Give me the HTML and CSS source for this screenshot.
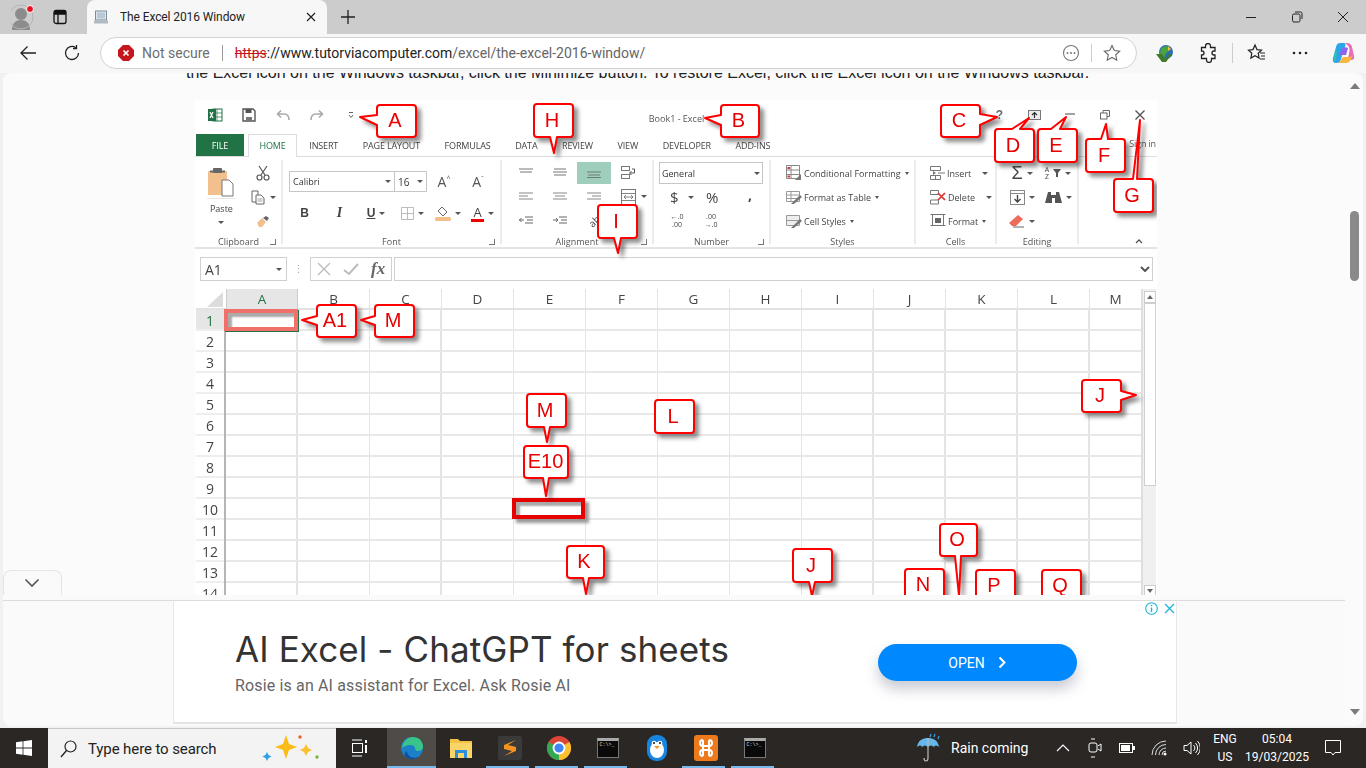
FILE: index.html
```html
<!DOCTYPE html>
<html lang="en">
<head>
<meta charset="utf-8">
<title>The Excel 2016 Window</title>
<link rel="stylesheet" href="styles.css">
</head>
<body>
<header class="tabstrip">
  <div class="profile">
    <svg width="24" height="26" viewBox="0 0 24 26"><circle cx="10" cy="10" r="6" fill="#8c8c8c"/><path d="M1 26c0-7 4-10 9-10s9 3 9 10z" fill="#8c8c8c"/><circle cx="10" cy="13" r="12" fill="none" stroke="#b5b5b5" stroke-width="1"/><circle cx="19" cy="5" r="3.5" fill="#e81123" stroke="#fff" stroke-width="1"/></svg>
  </div>
  <div class="vtabs">
    <svg width="16" height="16" viewBox="0 0 16 16"><rect x="2" y="1.5" width="12" height="13" rx="2" fill="none" stroke="#111" stroke-width="1.3"/><path d="M2 5h12M6 5v9" stroke="#111" stroke-width="1.3" fill="none"/><rect x="2" y="1.5" width="12" height="3.5" fill="#111"/></svg>
  </div>
  <div class="tab">
    <svg class="favicon" width="16" height="16" viewBox="0 0 16 16"><rect x="2.5" y="2" width="11" height="9" fill="#dfe6ec" stroke="#7d8c99"/><rect x="4" y="3.5" width="8" height="6" fill="#b8c8d6"/><rect x="1" y="11.5" width="14" height="3" fill="#aeb9c2"/></svg>
    <span class="tab-title">The Excel 2016 Window</span>
    <svg width="12" height="12" viewBox="0 0 12 12"><path d="M2 2l8 8M10 2l-8 8" stroke="#222" stroke-width="1.2"/></svg>
  </div>
  <div class="newtab"><svg width="16" height="16" viewBox="0 0 16 16"><path d="M8 1v14M1 8h14" stroke="#222" stroke-width="1.3"/></svg></div>
  <div class="winctl">
    <span class="winbtn"><svg width="12" height="12" viewBox="0 0 12 12"><path d="M1 6.5h10" stroke="#222" stroke-width="1"/></svg></span>
    <span class="winbtn"><svg width="12" height="12" viewBox="0 0 12 12"><rect x="1.5" y="3" width="7.5" height="8" rx="1.5" fill="none" stroke="#222"/><path d="M4 1h5.5A1.5 1.5 0 0 1 11 2.5V8" fill="none" stroke="#222"/></svg></span>
    <span class="winbtn"><svg width="12" height="12" viewBox="0 0 12 12"><path d="M1 1l10 10M11 1L1 11" stroke="#222" stroke-width="1"/></svg></span>
  </div>
</header>

<nav class="toolbar">
  <span class="navbtn"><svg width="18" height="16" viewBox="0 0 18 16"><path d="M17 8H2M8.500 1.500L2 8l6.500 6.500" fill="none" stroke="#222" stroke-width="1.300"/></svg></span>
  <span class="navbtn"><svg width="18" height="18" viewBox="0 0 18 18"><path d="M15.500 9A6.500 6.500 0 1 1 12.800 3.700" fill="none" stroke="#222" stroke-width="1.300"/><path d="M13.500 1v3.500H10" fill="none" stroke="#222" stroke-width="1.300"/></svg></span>
  <div class="addressbar">
    <svg class="warn" width="16" height="16" viewBox="0 0 16 16"><path d="M5 0h6l5 5v6l-5 5H5l-5-5V5z" fill="#c4161c"/><path d="M5.500 5.500l5 5M10.500 5.500l-5 5" stroke="#fff" stroke-width="1.700"/></svg>
    <span class="notsecure">Not secure</span>
    <span class="urlsep"></span>
    <span class="url"><span class="https">https</span>://www.tutorviacomputer.com<span class="urlpath">/excel/the-excel-2016-window/</span></span>
    <svg class="readicon" width="18" height="18" viewBox="0 0 18 18"><circle cx="9" cy="9" r="7.500" fill="none" stroke="#777" stroke-width="1.100"/><circle cx="5.500" cy="9" r="1" fill="#777"/><circle cx="9" cy="9" r="1" fill="#777"/><circle cx="12.500" cy="9" r="1" fill="#777"/></svg>
    <span class="addrsep"></span>
    <svg class="staricon" width="18" height="18" viewBox="0 0 18 18"><path d="M9 1.500l2.300 5 5.400.6-4 3.700 1.100 5.400L9 13.500l-4.800 2.700 1.100-5.400-4-3.700 5.400-.6z" fill="none" stroke="#666" stroke-width="1.100"/></svg>
  </div>
  <span class="extbtn ext-first"><svg width="20" height="20" viewBox="0 0 20 20"><circle cx="11" cy="9" r="7" fill="#2c6fb8"/><path d="M6 5l6-2 3 4-4 3-2 5-4-4z" fill="#4aa63c"/><path d="M13 3l3 3-3 2z" fill="#f2c037"/><path d="M1 11h6l3 5 4-5h3l-6 8H7z" fill="#3d7a2a"/></svg></span>
  <span class="extbtn"><svg width="16" height="20" viewBox="0 0 16 20"><path d="M5.500 3a2.500 2.500 0 0 1 5 0V4.500H15V8h-1a2 2 0 0 0 0 4h1v3.500h-3.500V17a2.500 2.500 0 0 1-5 0v-1.500H1.500V12H2a2 2 0 0 0 0-4H1.500V4.500h4z" fill="none" stroke="#222" stroke-width="1.300"/></svg></span>
  <span class="toolsep"></span>
  <span class="extbtn"><svg width="20" height="20" viewBox="0 0 20 20"><path d="M8 2l2 4.600 4.500.5-3.300 3.100.9 4.800L8 12.700 3.900 15l.9-4.800L1.500 7.100 6 6.600z" fill="none" stroke="#222" stroke-width="1.200"/><path d="M13 10h5M14 13h4M13 16h5" stroke="#222" stroke-width="1.200"/></svg></span>
  <span class="extbtn"><svg width="20" height="20" viewBox="0 0 20 20"><circle cx="4" cy="10" r="1.300" fill="#222"/><circle cx="10" cy="10" r="1.300" fill="#222"/><circle cx="16" cy="10" r="1.300" fill="#222"/></svg></span>
  <span class="extbtn"><svg width="24" height="24" viewBox="0 0 24 24"><path d="M9 2h4q2 0 1.500 2L10 18q-1 4-4 4H5q-4 0-3-5L5 6q1-4 4-4z" fill="#2aa6e8"/><path d="M14 2h2q4 0 5 4l2 9q1 4-3 4h-5q2-1 2.500-4l1-5q.5-5-4.500-8z" fill="#ea6cb8"/><path d="M5 22h10q3 0 4.500-3L22 14q-1 2-4 2h-5q-2 0-3 3-1 3-5 3z" fill="#f6b73c"/><path d="M8 14h7l2-7q-5-2-6.500 1.500z" fill="#8f63ee"/><path d="M3 14l3-5-1 9q-.5 3-1.500 2z" fill="#35c4a2"/></svg></span>
</nav>

<main class="viewport">
  <div class="page">
    <div class="content">
      <article class="article">
        <p class="lead">the Excel icon on the Windows taskbar, click the Minimize button. To restore Excel, click the Excel icon on the Windows taskbar.</p>
        <figure class="excel">
          <div class="titlebar">
            <div class="qat">
              <span class="qbtn"><svg width="16" height="16" viewBox="0 0 16 16"><rect x="6" y="2" width="9" height="12" fill="#fff" stroke="#217346"/><path d="M10 2v12M6 6h9M6 10h9" stroke="#217346" stroke-width=".7"/><rect x="1" y="2" width="8" height="12" fill="#217346"/><path d="M3 5l3 6M6 5l-3 6" stroke="#fff" stroke-width="1.200"/></svg></span>
              <span class="qbtn"><svg width="14" height="14" viewBox="0 0 14 14"><path d="M1 1h10l2 2v10H1z" fill="none" stroke="#555" stroke-width="1.400"/><rect x="3.500" y="1" width="6" height="4" fill="#555"/><rect x="4" y="9" width="6" height="4" fill="#777"/></svg></span>
              <span class="qbtn"><svg width="14" height="12" viewBox="0 0 14 12"><path d="M13 11c0-4-2-6-5-6H2M5 1.500L1.500 5 5 8.500" fill="none" stroke="#aaa" stroke-width="1.600"/></svg></span>
              <span class="qbtn"><svg width="14" height="12" viewBox="0 0 14 12"><path d="M1 11c0-4 2-6 5-6h6M9 1.500L12.500 5 9 8.500" fill="none" stroke="#aaa" stroke-width="1.600"/></svg></span>
              <span class="qbtn"><svg width="6" height="8" viewBox="0 0 6 8"><path d="M1 1.500h4M1 4l2 2.500L5 4" fill="none" stroke="#666" stroke-width="1"/></svg></span>
            </div>
            <span class="booktitle">Book1 - Excel</span>
            <div class="appctl">
              <span class="cbtn help">?</span>
              <span class="cbtn"><svg width="13" height="10" viewBox="0 0 13 10"><rect x=".5" y=".5" width="12" height="9" fill="#eee" stroke="#777"/><path d="M6.500 8V3M4 5l2.500-2.500L9 5" fill="none" stroke="#333" stroke-width="1.200"/></svg></span>
              <span class="cbtn"><svg width="10" height="4" viewBox="0 0 10 4"><path d="M0 1h10" stroke="#666" stroke-width="1.200"/></svg></span>
              <span class="cbtn"><svg width="10" height="10" viewBox="0 0 10 10"><rect x=".5" y="3" width="6.500" height="6" fill="#fff" stroke="#666"/><path d="M3 3V.5h6.500V6.500H7" fill="none" stroke="#666"/></svg></span>
              <span class="cbtn"><svg width="10" height="10" viewBox="0 0 10 10"><path d="M.5.500l9 9M9.500.500l-9 9" stroke="#555" stroke-width="1.400"/></svg></span>
            </div>
          </div>
          <div class="tabs">
            <span class="tab-file">FILE</span>
            <span class="tab-home">HOME</span>
            <span class="rtab">INSERT</span>
            <span class="rtab">PAGE LAYOUT</span>
            <span class="rtab">FORMULAS</span>
            <span class="rtab">DATA</span>
            <span class="rtab">REVIEW</span>
            <span class="rtab">VIEW</span>
            <span class="rtab">DEVELOPER</span>
            <span class="rtab">ADD-INS</span>
            <span class="signin">Sign in</span>
          </div>
          <div class="ribbon">
            <section class="group g-clip">
              <div class="gbody clip-body">
                <div class="paste">
                  <svg width="28" height="30" viewBox="0 0 28 30"><rect x="1" y="4" width="19" height="24" fill="#f2c08c"/><rect x="6" y="1" width="9" height="5" rx="1" fill="#666"/><rect x="3" y="3.500" width="15" height="2" fill="#666"/><path d="M15 13h7l4 4v12H15z" fill="#fff" stroke="#777"/></svg>
                  <span class="paste-rule"></span>
                  <span class="rlabel">Paste</span>
                  <i class="caret caret-paste"></i>
                </div>
                <div class="clip-tools">
                  <span class="rcell"><svg width="14" height="16" viewBox="0 0 14 16"><path d="M3 1l6 9M11 1L5 10" stroke="#555" stroke-width="1.200"/><circle cx="3.500" cy="12.500" r="2.500" fill="none" stroke="#555" stroke-width="1.200"/><circle cx="10.500" cy="12.500" r="2.500" fill="none" stroke="#555" stroke-width="1.200"/></svg></span>
                  <span class="rcell"><svg width="14" height="15" viewBox="0 0 14 15"><path d="M1 1h6v11H1z" fill="#fff" stroke="#666"/><path d="M5 5h5l3 3v6H5z" fill="#fff" stroke="#666"/><path d="M6.500 9h5M6.500 11h5" stroke="#888" stroke-width=".8"/></svg><i class="caret caret-gap"></i></span>
                  <span class="rcell"><svg width="14" height="13" viewBox="0 0 14 13"><path d="M1 8l5-5 4 4-4 5H3z" fill="#f2c08c"/><path d="M7 3l3-2 3 2-2 3z" fill="#666"/></svg></span>
                </div>
              </div>
              <div class="glabel">Clipboard</div><i class="launch"></i>
            </section>
            <section class="group g-font">
              <div class="font-row1">
                <span class="fontbox">Calibri<i class="caret"></i></span>
                <span class="sizebox">16<i class="caret"></i></span>
                <span class="growA">A<sup class="mini">^</sup></span>
                <span class="growA">A<sup class="mini">ˇ</sup></span>
              </div>
              <div class="font-row2">
                <span class="ft ft-b">B</span>
                <span class="ft ft-i">I</span>
                <span class="ft ft-u"><u>U</u><i class="caret"></i></span>
                <span class="ft ft-w"><svg width="13" height="13" viewBox="0 0 13 13"><path d="M.5.500h12v12H.5zM6.500.500v12M.5 6.500h12" fill="none" stroke="#bbb"/></svg><i class="caret"></i></span>
                <span class="ft ft-w"><svg width="16" height="15" viewBox="0 0 16 15"><path d="M7 1l5 5-4 4-5-5z" fill="#fff" stroke="#666"/><rect y="11" width="16" height="4" rx="1.500" fill="#f0bf8c"/></svg><i class="caret"></i></span>
                <span class="ft ft-w"><span class="colorA">A</span><i class="caret"></i></span>
              </div>
              <div class="glabel">Font</div><i class="launch"></i>
            </section>
            <section class="group g-align">
              <div class="align-grid">
                <span class="acell"><svg width="14" height="10" viewBox="0 0 14 10"><path d="M0 1h14M1 4h12" stroke="#777"/></svg></span>
                <span class="acell"><svg width="14" height="10" viewBox="0 0 14 10"><path d="M1 1h12M0 4h14M1 7h12" stroke="#777"/></svg></span>
                <span class="acell acell-on"><svg width="14" height="10" viewBox="0 0 14 10"><path d="M0 4h14M1 7h12M0 9.500h14" stroke="#6b7d75"/></svg></span>
                <span class="acell"><svg width="15" height="14" viewBox="0 0 15 14"><rect x=".5" y=".5" width="8" height="4" fill="none" stroke="#777"/><rect x=".5" y="8.500" width="8" height="4" fill="none" stroke="#777"/><path d="M11 3h2.500v4H9M10.500 5L8.500 7l2 2" fill="none" stroke="#555"/></svg></span>
                <span class="acell"><svg width="14" height="10" viewBox="0 0 14 10"><path d="M0 1h14M0 4h9M0 7h14" stroke="#888"/></svg></span>
                <span class="acell"><svg width="14" height="10" viewBox="0 0 14 10"><path d="M0 1h14M2 4h10M0 7h14" stroke="#888"/></svg></span>
                <span class="acell"><svg width="14" height="10" viewBox="0 0 14 10"><path d="M0 1h14M5 4h9M0 7h14" stroke="#888"/></svg></span>
                <span class="acell"><svg width="15" height="16" viewBox="0 0 15 16"><rect x=".5" y=".5" width="14" height="15" fill="none" stroke="#777"/><path d="M.5 4.500h14M.5 11.500h14M3 8h9M5 6L3 8l2 2M10 6l2 2-2 2" fill="none" stroke="#666" stroke-width=".8"/></svg><i class="caret caret-merge"></i></span>
                <span class="acell"><svg width="14" height="10" viewBox="0 0 14 10"><path d="M6 1h8M8 4h6M6 7h8M5 4H0M2.500 2L.5 4l2 2" fill="none" stroke="#666"/></svg></span>
                <span class="acell"><svg width="14" height="10" viewBox="0 0 14 10"><path d="M6 1h8M8 4h6M6 7h8M0 4h5M3 2l2 2-2 2" fill="none" stroke="#666"/></svg></span>
                <span class="acell orient">ab</span>
              </div>
              <div class="glabel">Alignment</div><i class="launch"></i>
            </section>
            <section class="group g-num">
              <span class="numbox">General<i class="caret"></i></span>
              <div class="num-row"><span class="nm-dollar">$</span><i class="caret"></i><span class="nm-pct">%</span><span class="nm-comma">,</span></div>
              <div class="dec-row"><span class="dec">←.0<br>.00</span><span class="dec">.00<br>→.0</span></div>
              <div class="glabel">Number</div><i class="launch"></i>
            </section>
            <section class="group g-styles">
              <div class="list">
                <span class="litem"><svg width="16" height="16" viewBox="0 0 16 16"><path d="M.5.500h13v13H.5zM.5 5h13M.5 9.500h13M5 .500v13" fill="none" stroke="#888"/><rect x="1.500" y="2" width="2.500" height="2" fill="#d33"/><rect x="1.500" y="10.500" width="2.500" height="2" fill="#d33"/><path d="M9 15l6-6v6z" fill="#777"/></svg>Conditional Formatting<i class="caret caret-tight"></i></span>
                <span class="litem"><svg width="16" height="16" viewBox="0 0 16 16"><path d="M.5 2.500h13v10H.5zM.5 6h13M.5 9.500h13M5 2.500v10" fill="none" stroke="#999"/><path d="M5 15l9-9 2 2-8 7z" fill="#777"/></svg>Format as Table<i class="caret caret-tight"></i></span>
                <span class="litem"><svg width="16" height="16" viewBox="0 0 16 16"><path d="M.5 2.500h13v10H.5z" fill="#eee" stroke="#999"/><path d="M.5 7.500h13" stroke="#999"/><path d="M5 15l9-9 2 2-8 7z" fill="#777"/></svg>Cell Styles<i class="caret caret-tight"></i></span>
              </div>
              <div class="glabel">Styles</div>
            </section>
            <section class="group g-cells">
              <div class="list">
                <span class="litem litem-c"><svg width="15" height="14" viewBox="0 0 15 14"><path d="M.5.500h10v4H.5zM.5 9.500h10v4H.5zM5.500 9.500v4M8 7h7" fill="none" stroke="#777"/><path d="M3 5v4l3-2z" fill="#777"/></svg>Insert<i class="caret caret-c1"></i></span>
                <span class="litem litem-c"><svg width="16" height="15" viewBox="0 0 16 15"><path d="M.5.500h8v4H.5zM.5 10h8v4H.5z" fill="none" stroke="#777"/><path d="M8 3l7 7M15 3l-7 7" stroke="#d33" stroke-width="1.700"/></svg>Delete<i class="caret caret-c1"></i></span>
                <span class="litem litem-c"><svg width="16" height="16" viewBox="0 0 16 16"><path d="M2.500 1.500h11v11h-11zM.5 1.500h15M.5 12.500h15" fill="none" stroke="#777"/><rect x="5" y="5" width="6" height="5" fill="#666"/></svg>Format<i class="caret caret-tight"></i></span>
              </div>
              <div class="glabel">Cells</div>
            </section>
            <section class="group g-edit">
              <div class="edit-grid">
                <span class="ecell"><span class="sigma">Σ</span><i class="caret"></i></span>
                <span class="ecell"><span class="sortaz">A<br>Z</span><svg width="8" height="8" viewBox="0 0 8 8"><path d="M0 0h8L5 4v4H3V4z" fill="#555"/></svg><i class="caret"></i></span>
                <span class="ecell"><svg width="15" height="15" viewBox="0 0 15 15"><rect x=".5" y=".5" width="14" height="14" fill="#fff" stroke="#888"/><path d="M.5 3.500h14" stroke="#888"/><path d="M7.500 5v7M4.500 9l3 3 3-3" fill="none" stroke="#444" stroke-width="1.400"/></svg><i class="caret"></i></span>
                <span class="ecell"><svg width="17" height="15" viewBox="0 0 17 15"><path d="M3 2h3v3h5V2h3l3 11H10V8H7v5H0z" fill="#555"/></svg><i class="caret"></i></span>
                <span class="ecell"><svg width="16" height="14" viewBox="0 0 16 14"><path d="M0 9l9-8 5 4-7 7H3z" fill="#ee6a5a"/><path d="M4 13h11" stroke="#666"/></svg><i class="caret"></i></span>
              </div>
              <div class="glabel">Editing</div>
            </section>
            <section class="g-last"><svg width="8" height="5" viewBox="0 0 8 5"><path d="M1 4l3-3 3 3" fill="none" stroke="#555" stroke-width="1.300"/></svg></section>
          </div>
          <div class="formula">
            <span class="namebox">A1<i class="caret"></i></span>
            <span class="fdots">⋮</span>
            <span class="fxbox">
              <svg width="14" height="14" viewBox="0 0 14 14"><path d="M1 1l12 12M13 1L1 13" stroke="#bbb" stroke-width="1.300"/></svg>
              <svg width="16" height="14" viewBox="0 0 16 14"><path d="M1 8l5 4 9-10" fill="none" stroke="#bbb" stroke-width="2"/></svg>
              <span class="fx">fx</span>
            </span>
            <span class="fbox"><svg width="10" height="6" viewBox="0 0 10 6"><path d="M1 1l4 4 4-4" fill="none" stroke="#555" stroke-width="2"/></svg></span>
          </div>
          <div class="sheet">
            <div class="corner"><svg width="16" height="15" viewBox="0 0 16 15"><path d="M16 0v15H0z" fill="#dcdcdc"/></svg></div>
            <div class="colheads">
              <span class="ch ch-on">A</span><span class="ch">B</span><span class="ch">C</span><span class="ch">D</span><span class="ch">E</span><span class="ch">F</span><span class="ch">G</span><span class="ch">H</span><span class="ch">I</span><span class="ch">J</span><span class="ch">K</span><span class="ch">L</span><span class="ch ch-last">M</span>
            </div>
            <div class="vscroll">
              <span class="vs-btn"><i class="tri-up"></i></span>
              <span class="vs-thumb"></span>
              <span class="vs-btn vs-down"><i class="tri-down"></i></span>
            </div>
            <div class="rowheads">
              <span class="rh rh-on">1</span><span class="rh">2</span><span class="rh">3</span><span class="rh">4</span><span class="rh">5</span><span class="rh">6</span><span class="rh">7</span><span class="rh">8</span><span class="rh">9</span><span class="rh">10</span><span class="rh">11</span><span class="rh">12</span><span class="rh">13</span><span class="rh">14</span>
            </div>
            <div class="cells"></div>
          </div>

          <span class="selbox sel-a1"></span>
          <span class="selbox sel-e10"></span>

          <div class="callout c-a"><svg viewBox="0 0 39 32"><path d="M3 0H36Q39 0 39 3V29Q39 32 36 32H3Q0 32 0 29V20L-17 12L0 10V3Q0 0 3 0Z"/></svg><span>A</span></div>
          <div class="callout c-h"><svg viewBox="0 0 39 33"><path d="M3 0H36Q39 0 39 3V30Q39 33 36 33H23L20 49L16 33H3Q0 33 0 30V3Q0 0 3 0Z"/></svg><span>H</span></div>
          <div class="callout c-i"><svg viewBox="0 0 39 33"><path d="M3 0H36Q39 0 39 3V30Q39 33 36 33H23L20 48L16 33H3Q0 33 0 30V3Q0 0 3 0Z"/></svg><span>I</span></div>
          <div class="callout c-b"><svg viewBox="0 0 38 32"><path d="M3 0H35Q38 0 38 3V29Q38 32 35 32H3Q0 32 0 29V20L-16 13L0 10V3Q0 0 3 0Z"/></svg><span>B</span></div>
          <div class="callout c-c"><svg viewBox="0 0 39 32"><path d="M3 0H36Q39 0 39 3V9L56 12L39 20V29Q39 32 36 32H3Q0 32 0 29V3Q0 0 3 0Z"/></svg><span>C</span></div>
          <div class="callout c-d"><svg viewBox="0 0 39 33"><path d="M3 0H17L34 -11L25 0H36Q39 0 39 3V30Q39 33 36 33H3Q0 33 0 30V3Q0 0 3 0Z"/></svg><span>D</span></div>
          <div class="callout c-e"><svg viewBox="0 0 39 33"><path d="M3 0H13L28 -12L22 0H36Q39 0 39 3V30Q39 33 36 33H3Q0 33 0 30V3Q0 0 3 0Z"/></svg><span>E</span></div>
          <div class="callout c-f"><svg viewBox="0 0 39 33"><path d="M3 0H15L20 -15L22 0H36Q39 0 39 3V30Q39 33 36 33H3Q0 33 0 30V3Q0 0 3 0Z"/></svg><span>F</span></div>
          <div class="callout c-g"><svg viewBox="0 0 39 33"><path d="M3 0H19L26 -59L23 0H36Q39 0 39 3V30Q39 33 36 33H3Q0 33 0 30V3Q0 0 3 0Z"/></svg><span>G</span></div>
          <div class="callout c-a1"><svg viewBox="0 0 39 32"><path d="M3 0H36Q39 0 39 3V29Q39 32 36 32H3Q0 32 0 29V20L-15 15L0 11V3Q0 0 3 0Z"/></svg><span>A1</span></div>
          <div class="callout c-m1"><svg viewBox="0 0 39 32"><path d="M3 0H36Q39 0 39 3V29Q39 32 36 32H3Q0 32 0 29V20L-14 15L0 11V3Q0 0 3 0Z"/></svg><span>M</span></div>
          <div class="callout c-m2"><svg viewBox="0 0 39 33"><path d="M3 0H36Q39 0 39 3V30Q39 33 36 33H23L20 48L17 33H3Q0 33 0 30V3Q0 0 3 0Z"/></svg><span>M</span></div>
          <div class="callout c-e10"><svg viewBox="0 0 44 32"><path d="M3 0H41Q44 0 44 3V29Q44 32 41 32H25L22 50L19 32H3Q0 32 0 29V3Q0 0 3 0Z"/></svg><span>E10</span></div>
          <div class="callout c-l"><svg viewBox="0 0 39 33"><path d="M3 0H36Q39 0 39 3V30Q39 33 36 33H3Q0 33 0 30V3Q0 0 3 0Z"/></svg><span>L</span></div>
          <div class="callout c-k"><svg viewBox="0 0 37 32"><path d="M3 0H34Q37 0 37 3V29Q37 32 34 32H22L19 48L16 32H3Q0 32 0 29V3Q0 0 3 0Z"/></svg><span>K</span></div>
          <div class="callout c-j1"><svg viewBox="0 0 39 32"><path d="M3 0H36Q39 0 39 3V11L54 15L39 20V29Q39 32 36 32H3Q0 32 0 29V3Q0 0 3 0Z"/></svg><span>J</span></div>
          <div class="callout c-j2"><svg viewBox="0 0 39 33"><path d="M3 0H36Q39 0 39 3V30Q39 33 36 33H22L19 47L16 33H3Q0 33 0 30V3Q0 0 3 0Z"/></svg><span>J</span></div>
          <div class="callout c-o"><svg viewBox="0 0 37 32"><path d="M3 0H34Q37 0 37 3V29Q37 32 34 32H21L19 72L15 32H3Q0 32 0 29V3Q0 0 3 0Z"/></svg><span>O</span></div>
          <div class="callout c-n"><svg viewBox="0 0 39 32"><path d="M3 0H36Q39 0 39 3V29Q39 32 36 32H3Q0 32 0 29V3Q0 0 3 0Z"/></svg><span>N</span></div>
          <div class="callout c-p"><svg viewBox="0 0 39 32"><path d="M3 0H36Q39 0 39 3V29Q39 32 36 32H3Q0 32 0 29V3Q0 0 3 0Z"/></svg><span>P</span></div>
          <div class="callout c-q"><svg viewBox="0 0 39 32"><path d="M3 0H36Q39 0 39 3V29Q39 32 36 32H3Q0 32 0 29V3Q0 0 3 0Z"/></svg><span>Q</span></div>
        </figure>
      </article>
    </div>
    <aside class="pagescroll">
      <i class="ps-up"></i>
      <span class="ps-thumb"></span>
      <i class="ps-down"></i>
    </aside>

    <div class="collapse"><svg width="16" height="10" viewBox="0 0 16 10"><path d="M1.500 1.500L8 8l6.500-6.500" fill="none" stroke="#555" stroke-width="1.600"/></svg></div>
    <aside class="adbar">
      <div class="ad">
        <div class="ad-text">
          <div class="ad-title">AI Excel - ChatGPT for sheets</div>
          <div class="ad-sub">Rosie is an AI assistant for Excel. Ask Rosie AI</div>
        </div>
        <div class="ad-btn">OPEN<svg width="9" height="13" viewBox="0 0 9 13"><path d="M1.500 1.500l5 5-5 5" fill="none" stroke="#fff" stroke-width="2"/></svg></div>
        <div class="ad-icons">
          <svg width="13" height="13" viewBox="0 0 13 13"><circle cx="6.500" cy="6.500" r="5.800" fill="none" stroke="#1fb5d6" stroke-width="1.100"/><path d="M6.500 5.500v4.500" stroke="#1fb5d6" stroke-width="1.400"/><circle cx="6.500" cy="3.500" r=".8" fill="#1fb5d6"/></svg>
          <svg width="11" height="11" viewBox="0 0 11 11"><path d="M1 1l9 9M10 1l-9 9" stroke="#1fb5d6" stroke-width="1.300"/></svg>
        </div>
      </div>
    </aside>
  </div>
</main>

<footer class="taskbar">
  <span class="start"><svg width="16" height="16" viewBox="0 0 16 16"><path d="M0 2.200L6.600 1.300V7.600H0zM7.400 1.200L16 0V7.600H7.400zM0 8.400H6.600V14.700L0 13.800zM7.400 8.400H16V16L7.400 14.800z" fill="#fff"/></svg></span>
  <div class="search">
    <svg width="17" height="18" viewBox="0 0 17 18"><circle cx="10.500" cy="6.500" r="5.500" fill="none" stroke="#222" stroke-width="1.200"/><path d="M6.500 10.500L1 17" stroke="#222" stroke-width="1.300"/></svg>
    <span class="search-text">Type here to search</span>
    <svg class="sparkle" width="60" height="30" viewBox="0 0 60 30"><path d="M26 2l3 9 8 3-8 3-3 9-3-9-8-3 8-3z" fill="#fbbc1a"/><path d="M46 11l2 4 4 2-4 2-2 4-2-4-4-2 4-2z" fill="#fbc02d"/><path d="M7 19l1.500 3 3 1.500-3 1.500L7 28l-1.500-3-3-1.500 3-1.500z" fill="#2d9fe8"/><circle cx="40" cy="4" r="1.700" fill="#e8632a"/><circle cx="57" cy="24" r="1.700" fill="#7cb342"/></svg>
  </div>
  <span class="taskview"><svg width="16" height="18" viewBox="0 0 16 18"><path d="M0 1h10M0 17h10" stroke="#fff"/><rect x=".5" y="4.500" width="10" height="9" fill="none" stroke="#fff"/><rect x="13" y="1" width="2" height="3" fill="#fff"/><rect x="13" y="6" width="2" height="8" fill="#fff"/></svg></span>
  <span class="app app-active on"><svg width="24" height="24" viewBox="0 0 24 24"><circle cx="12" cy="12" r="11" fill="#1b7fc9"/><path d="M2 12C3 4 9 1 13 1c6 0 10 4 10 10 0 2-2 4-5 4-4 0-2-3-4-5-3-2-8-1-12 2z" fill="#39c48a"/><path d="M7 15c0 5 5 8 11 6-3 3-10 3-13-1-1-2 0-4 2-5z" fill="#0f4f9c"/></svg></span>
  <span class="app"><svg width="22" height="20" viewBox="0 0 22 20"><path d="M0 1h8l2 2h12v17H0z" fill="#f6c244"/><rect y="5" width="22" height="15" fill="#fbd568"/><rect x="5" y="12" width="12" height="8" fill="#2a8fdc"/><rect x="8" y="15" width="6" height="5" fill="#fbd568"/></svg></span>
  <span class="app on"><svg width="24" height="24" viewBox="0 0 24 24"><rect width="24" height="24" rx="2" fill="#3a3a3a"/><path d="M18 4L6 9v4l8 2-8 5 12-5v-4l-8-2z" fill="#f7931e"/></svg></span>
  <span class="app on"><svg width="24" height="24" viewBox="0 0 24 24"><circle cx="12" cy="12" r="12" fill="#db4437"/><path d="M12 12L22.400 6A12 12 0 0 1 12 24z" fill="#fbc02d"/><path d="M12 12L12 24A12 12 0 0 1 1.600 6z" fill="#34a853"/><circle cx="12" cy="12" r="5.500" fill="#4285f4" stroke="#fff" stroke-width="1.800"/></svg></span>
  <span class="app on"><span class="cmd"><span>C:\&gt;_</span></span></span>
  <span class="app"><svg width="20" height="26" viewBox="0 0 20 26"><rect width="20" height="26" rx="9" fill="#1585e0"/><ellipse cx="10" cy="15" rx="7" ry="8" fill="#fff"/><circle cx="7" cy="8" r="2.300" fill="#fff"/><circle cx="13" cy="8" r="2.300" fill="#fff"/><circle cx="7" cy="8" r="1" fill="#111"/><circle cx="13" cy="8" r="1" fill="#111"/><path d="M7 11h6l-3 3z" fill="#f59a1e"/></svg></span>
  <span class="app on"><svg width="24" height="26" viewBox="0 0 24 26"><rect width="24" height="26" rx="3" fill="#ee7a1e"/><path d="M9 5a3 3 0 0 0 0 6h6a3 3 0 0 0 0-6M9 21a3 3 0 0 1 0-6h6a3 3 0 0 1 0 6M9 5v16M15 5v16" fill="none" stroke="#fff" stroke-width="2"/></svg></span>
  <span class="app on"><span class="cmd"><span>C:\&gt;_</span></span></span>

  <div class="tray">
    <div class="weather">
      <svg width="28" height="30" viewBox="0 0 28 30"><path d="M2 14C3 7 8 5 13 5s10 2 11 9c-2-2-4-2-5 0-2-2-4-2-6 0-2-2-4-2-6 0-1-2-3-2-5 0z" fill="#67b6ea"/><path d="M13 5v20q0 3-2 3t-2-3" fill="none" stroke="#bbb" stroke-width="1.200"/><path d="M16 1l-1 3M20 1l-1 3M24 3l-1 3" stroke="#3e9fe0" stroke-width="1.200"/></svg>
      <span class="weather-text">Rain coming</span>
    </div>
    <span class="tic"><svg width="14" height="8" viewBox="0 0 14 8"><path d="M1 7l6-6 6 6" fill="none" stroke="#fff" stroke-width="1.100"/></svg></span>
    <span class="tic"><svg width="14" height="20" viewBox="0 0 14 20"><path d="M3 1h4M3 19h4" stroke="#fff"/><rect x="1" y="5" width="8" height="9" rx="2" fill="none" stroke="#fff"/><path d="M10 8l3-2v7l-3-2" fill="none" stroke="#fff"/></svg></span>
    <span class="tic"><svg width="16" height="10" viewBox="0 0 16 10"><rect x=".5" y=".5" width="13" height="9" fill="none" stroke="#fff"/><rect x="2" y="2" width="9" height="6" fill="#fff"/><rect x="14" y="3" width="2" height="4" fill="#fff"/></svg></span>
    <span class="tic"><svg width="16" height="16" viewBox="0 0 16 16"><path d="M1 15A14 14 0 0 1 15 1M4.500 15A10.500 10.500 0 0 1 15 4.500M8 15A7 7 0 0 1 15 8M11 15A4 4 0 0 1 15 11" fill="none" stroke="#ddd" stroke-width="1"/><circle cx="14" cy="14" r="1.500" fill="#fff"/></svg></span>
    <span class="tic"><svg width="17" height="16" viewBox="0 0 17 16"><path d="M1 5.500h3L8 2v12l-4-3.500H1z" fill="none" stroke="#fff"/><path d="M10.500 5a4 4 0 0 1 0 6M12.500 3a7 7 0 0 1 0 10M14.500 1a10 10 0 0 1 0 14" fill="none" stroke="#fff"/></svg></span>
    <span class="lang"><span>ENG</span><span>US</span></span>
    <span class="clock"><span>05:04</span><span>19/03/2025</span></span>
    <span class="notify"><svg width="16" height="16" viewBox="0 0 16 16"><path d="M.5.500h15v12H10L8 15l-2-2.500H.5z" fill="none" stroke="#fff"/></svg></span>
  </div>
</footer>
</body>
</html>
```
FILE: styles.css
```css
* { box-sizing: border-box; }
html, body { margin: 0; height: 100%; }
body {
  width: 1366px; height: 768px; overflow: hidden;
  display: flex; flex-direction: column;
  font-family: "Open Sans", "Liberation Sans", sans-serif;
  background: #f7f7f7; color: #222;
}
i { display: block; font-style: normal; }

/* browser tab strip */
.tabstrip { height: 34px; flex: none; background: #cccccc; display: flex; align-items: stretch; }
.profile { width: 44px; display: flex; align-items: center; justify-content: center; padding-left: 2px; }
.vtabs { width: 32px; display: flex; align-items: center; justify-content: center; }
.tab {
  width: 240px; margin-left: 11px; background: #f7f7f7; border-radius: 8px 8px 0 0;
  display: flex; align-items: center; padding: 0 10px 0 6px;
}
.favicon { margin-right: 11px; }
.tab-title { flex: 1; font: 12px "Roboto", sans-serif; letter-spacing: -.1px; color: #222; }
.newtab { width: 42px; display: flex; align-items: center; justify-content: center; }
.winctl { margin-left: auto; display: flex; }
.winbtn { width: 46px; display: flex; align-items: center; justify-content: center; }

/* browser toolbar */
.toolbar { height: 39px; flex: none; background: #f7f7f7; display: flex; align-items: center; padding-left: 8px; padding-bottom: 1px; }
.navbtn { width: 40px; display: flex; align-items: center; justify-content: center; margin-right: 4px; }
.navbtn + .navbtn { margin-right: 0; }
.addressbar {
  width: 1037px; height: 32px; margin-left: 8px; background: #fff;
  border: 1px solid #d2d2d2; border-radius: 16px; display: flex; align-items: center;
  padding-left: 17px; font: 14px "Roboto", sans-serif;
}
.notsecure { color: #6e6e6e; margin-left: 8px; }
.urlsep { width: 1px; height: 16px; background: #999; margin: 0 12px; }
.url { color: #222; flex: 1; }
.https { color: #c4161c; text-decoration: line-through; }
.urlpath { color: #666; }
.readicon { margin-right: 11px; }
.addrsep { width: 1px; height: 18px; background: #ccc; }
.staricon { margin: 0 15px 0 11px; }
.extbtn { width: 43px; display: flex; align-items: center; justify-content: center; }
.ext-first { margin-left: 6px; }
.toolsep { width: 1px; height: 20px; background: #ccc; margin: 0 2px 0 3px; }

/* viewport / page */
.viewport { flex: 1; min-height: 0; padding: 0 3px 2px; background: #f1f1f1; }
.page {
  position: relative; height: 100%; background: #fbfbfb; border-radius: 8px; overflow: hidden;
  display: flex;
}
.content { flex: 1; min-width: 0; overflow: hidden; }
.article { margin-top: -12px; padding-left: 183px; }
.lead { margin: 0 0 15px; font: 16px/24px "Liberation Sans", sans-serif; color: #222; white-space: nowrap; }
.pagescroll { width: 17px; flex: none; display: flex; flex-direction: column; align-items: center; padding: 10px 0 11px; }
.ps-up { border: 4px solid transparent; border-top: 0; border-bottom: 6px solid #7b7b7b; border-left-width: 5px; border-right-width: 5px; }
.ps-thumb { width: 9px; height: 70px; background: #8a8a8a; border-radius: 5px; margin-top: 122px; }
.ps-down { margin-top: auto; border: 5px solid transparent; border-bottom: 0; border-top: 6px solid #7b7b7b; }

/* Excel figure */
.excel {
  position: relative; margin: 0 0 0 9px; width: 962px; height: 500px; background: #fff;
  padding-left: 1px; overflow: hidden;
  font-family: "Open Sans", "Liberation Sans", sans-serif; font-size: 9px; color: #444;
  filter: blur(.3px);
}
.caret { width: 0; height: 0; border: 3px solid transparent; border-bottom: 0; border-top: 3px solid #555; flex: none; }
.titlebar { height: 34px; display: grid; grid-template-columns: 1fr auto 1fr; align-items: center; padding-bottom: 4px; }
.qat { display: flex; padding-left: 2px; }
.qbtn { width: 34px; display: flex; align-items: center; justify-content: center; }
.booktitle { font-size: 9px; color: #555; padding-top: 7px; }
.appctl { display: flex; justify-content: flex-end; }
.cbtn { width: 35px; display: flex; align-items: center; justify-content: center; }
.help { font: bold 12px "Liberation Sans", sans-serif; color: #666; }

.tabs { height: 22px; display: flex; align-items: center; position: relative; font-size: 9px; letter-spacing: -.15px; }
.tab-file { width: 48px; height: 22px; background: #217346; color: #fff; display: flex; align-items: center; justify-content: center; }
.tab-home {
  width: 49px; height: 23px; margin-left: 4px; background: #fff; color: #217346;
  border: 1px solid #ddd; border-bottom: 0; display: flex; align-items: center; justify-content: center; position: relative; top: 0; z-index: 1;
}
.rtab { padding: 0 12.3px; }
.signin { position: absolute; right: 1px; top: 3px; color: #555; }

.ribbon {
  height: 93px; display: flex; border-top: 1px solid #dcdcdc; border-bottom: 2px solid #e4e4e4;
  padding-top: 3px; padding-bottom: 3px; margin-left: -1px; padding-left: 1px;
}
.group { position: relative; border-right: 2px solid #ececec; display: flex; flex-direction: column; flex: none; }
.glabel { position: absolute; left: 0; right: 0; bottom: -4px; text-align: center; color: #555; font-size: 9px; line-height: 12px; }
.launch { position: absolute; right: 5px; bottom: -1px; width: 6px; height: 6px; border-right: 1px solid #777; border-bottom: 1px solid #777; }
.rcell { height: 24px; display: flex; align-items: center; justify-content: center; gap: 4px; }
.rlabel { font-size: 9px; color: #444; }

.g-clip { width: 87px; }
.clip-body { display: flex; }
.paste { width: 50px; display: flex; flex-direction: column; align-items: center; padding-top: 7px; margin-left: 1px; }
.paste-rule { width: 28px; height: 1px; background: #e6e6e6; margin: 1px 0 3px; }
.caret-paste { margin-top: 6px; }
.clip-tools { width: 36px; padding-top: 1px; }
.caret-gap { margin-left: 1px; }

.g-font { width: 219px; }
.font-row1 { display: flex; align-items: center; margin: 11px 0 0 6px; height: 21px; }
.fontbox, .sizebox, .numbox {
  border: 1px solid #c6c6c6; background: #fff; display: flex; align-items: center; justify-content: space-between;
  font-size: 9px; color: #333; padding: 0 3px;
}
.fontbox { width: 106px; height: 21px; }
.sizebox { width: 33px; height: 21px; margin-left: -1px; font-size: 10px; }
.growA { width: 34px; text-align: center; font-size: 14px; color: #555; line-height: 1; }
.mini { font-size: 7px; line-height: 0; }
.font-row2 { display: flex; align-items: center; height: 20px; margin: 11px 0 0 4px; }
.ft { display: flex; align-items: center; justify-content: center; gap: 4px; height: 20px; font-size: 12px; color: #444; }
.ft-b { width: 35px; font-weight: 700; font-family: "Liberation Sans", sans-serif; }
.ft-i { width: 35px; font-style: italic; font-family: "Liberation Serif", serif; font-size: 14px; font-weight: 700; }
.ft-u { width: 38px; font-weight: 700; font-family: "Liberation Sans", sans-serif; }
.ft-w { width: 35px; }
.colorA { font-size: 13px; line-height: 14px; border-bottom: 3px solid #e00; padding: 0 2px; color: #444; }

.g-align { width: 152px; }
.align-grid { display: grid; grid-template-columns: repeat(4, 34px); grid-auto-rows: 24px; padding-left: 7px; padding-top: 1px; }
.acell { display: flex; align-items: center; justify-content: center; position: relative; }
.acell-on { background: #9fcfbc; height: 22px; margin-top: 1px; }
.caret-merge { position: absolute; left: 30px; top: 10px; }
.orient { transform: rotate(-45deg); font-size: 10px; color: #444; }

.g-num { width: 117px; }
.numbox { width: 104px; height: 22px; margin: 2px 0 0 5px; padding: 0 2px; }
.num-row { display: flex; align-items: center; height: 24px; margin-top: 1px; color: #444; }
.nm-dollar { font-size: 15px; margin-left: 16px; width: 18px; }
.nm-pct { font-size: 15px; margin-left: 12px; width: 24px; }
.nm-comma { font-size: 14px; font-weight: 700; margin-left: 18px; position: relative; top: -3px; }
.dec-row { display: flex; height: 24px; padding-left: 12px; gap: 12px; }
.dec { width: 22px; text-align: center; font-size: 7px; line-height: 8px; padding-top: 4px; }

.g-styles { width: 145px; }
.list { padding: 1px 0 0 15px; }
.litem { display: flex; align-items: center; height: 24px; gap: 2px; color: #444; font-size: 9px; white-space: nowrap; }
.litem svg { flex: none; }
.caret-tight { margin-left: 2px; border-width: 2.500px; border-top-width: 3px; border-bottom: 0; }
.g-cells { width: 81px; }
.g-cells .list { padding-left: 14px; }
.litem-c { gap: 2px; }
.caret-c1 { margin-left: 9px; }

.g-edit { width: 82px; }
.edit-grid { display: grid; grid-template-columns: 36px 36px; grid-auto-rows: 24px; padding: 1px 0 0 7px; column-gap: 0; }
.ecell { display: flex; align-items: center; justify-content: center; gap: 4px; }
.sigma { font: 18px "Liberation Sans", sans-serif; color: #444; }
.sortaz { font-size: 7px; line-height: 7px; text-align: center; }
.g-last { flex: 1; display: flex; align-items: flex-end; justify-content: flex-end; padding: 0 14px 0 0; }

.formula { height: 24px; margin: 8px 4px 8px 4px; display: flex; }
.namebox, .fxbox, .fbox { border: 1px solid #d0d0d0; height: 24px; background: #fff; display: flex; align-items: center; }
.namebox { width: 87px; justify-content: space-between; padding: 0 4px; font-size: 14px; color: #444; }
.fdots { width: 23px; text-align: center; color: #aaa; font-size: 11px; line-height: 24px; }
.fxbox { width: 82px; gap: 12px; padding-left: 6px; }
.fx { font: italic 700 17px "Liberation Serif", serif; color: #666; }
.fbox { flex: 1; margin-left: 2px; justify-content: flex-end; padding-right: 2px; }

.sheet { display: grid; grid-template-columns: 30px 915px 15px; grid-template-rows: 21px minmax(0, 1fr); height: 308px; }
.corner { display: flex; align-items: flex-end; justify-content: flex-end; padding: 0 3px 1px 0; border-bottom: 2px solid #e2e2e2; }
.colheads { display: grid; grid-template-columns: repeat(12, 72px) 51px; border-bottom: 2px solid #e2e2e2; }
.ch { text-align: center; font-size: 13.5px; line-height: 21px; color: #444; border-right: 1px solid #e4e4e4; }
.ch-last { border-right: 0; }
.ch-on { background: #e6e6e6; color: #217346; border-left: 1px solid #ccc; border-right: 1px solid #ccc; }
.vscroll { grid-row: 1 / 3; grid-column: 3; display: flex; flex-direction: column; align-items: center; padding-top: 2px; background: #f0f0f0; border-left: 2px solid #dedede; min-height: 0; }
.vs-btn { width: 12px; height: 12px; border: 1px solid #ccc; background: #fff; display: flex; align-items: center; justify-content: center; flex: none; }
.vs-thumb { width: 12px; height: 183px; background: #fff; border: 1px solid #d0d0d0; flex: none; }
.vs-down { margin-top: auto; }
.tri-up { border: 3px solid transparent; border-top: 0; border-bottom: 4px solid #666; }
.tri-down { border: 3px solid transparent; border-bottom: 0; border-top: 4px solid #666; }
.rowheads { display: grid; grid-auto-rows: 21px; border-right: 2px solid #b5b5b5; overflow: hidden; min-height: 0; }
.rh { text-align: center; font-size: 14px; line-height: 22px; color: #444; border-bottom: 2px solid #eee; }
.rh-on { background: #e6e6e6; color: #217346; }
.cells {
  background-image:
    repeating-linear-gradient(to bottom, transparent 0 19px, #e8e8e8 19px 21px),
    repeating-linear-gradient(to right, transparent 0 70.500px, #e4e4e4 70.500px 72px);
}

/* selection rectangles */
.selbox { position: absolute; display: block; }
.sel-a1 { left: 29px; top: 209px; width: 74px; height: 22px; border: 4px solid #f0706a; background: #fff; box-shadow: inset 4px 4px 2px #aaa, 1px 1px 0 #217346; }
.sel-e10 { left: 317px; top: 398px; width: 73px; height: 21px; border: 4px solid #e60000; background: #fff; box-shadow: inset 4px 4px 2px #aaa, 4px 4px 3px #999; }

/* callouts */
.callout { position: absolute; display: flex; align-items: center; justify-content: center; padding: 0 3px 2px 0; }
.callout svg { position: absolute; inset: 0; width: 100%; height: 100%; overflow: visible; filter: drop-shadow(4px 4px 2px rgba(50, 50, 50, .55)); }
.callout path { fill: #fff; stroke: #f00; stroke-width: 2; stroke-linejoin: round; }
.callout span { position: relative; font: 20px/1 "Liberation Sans", sans-serif; color: #e80000; }
.c-a { left: 182px; top: 5px; width: 39px; height: 32px; }
.c-h { left: 339px; top: 4px; width: 39px; height: 33px; }
.c-i { left: 403px; top: 105px; width: 39px; height: 33px; }
.c-b { left: 526px; top: 5px; width: 38px; height: 32px; }
.c-c { left: 746px; top: 5px; width: 39px; height: 32px; }
.c-d { left: 800px; top: 29px; width: 39px; height: 33px; }
.c-e { left: 843px; top: 29px; width: 39px; height: 33px; }
.c-f { left: 891px; top: 39px; width: 39px; height: 33px; }
.c-g { left: 919px; top: 79px; width: 39px; height: 33px; }
.c-a1 { left: 122px; top: 205px; width: 39px; height: 32px; }
.c-m1 { left: 180px; top: 205px; width: 39px; height: 32px; }
.c-m2 { left: 332px; top: 294px; width: 39px; height: 33px; }
.c-e10 { left: 329px; top: 346px; width: 44px; height: 32px; padding-right: 1px; }
.c-l { left: 460px; top: 300px; width: 39px; height: 33px; }
.c-k { left: 372px; top: 446px; width: 37px; height: 32px; }
.c-j1 { left: 887px; top: 280px; width: 39px; height: 32px; }
.c-j2 { left: 598px; top: 449px; width: 39px; height: 33px; }
.c-o { left: 745px; top: 424px; width: 37px; height: 32px; }
.c-n { left: 710px; top: 469px; width: 39px; height: 32px; }
.c-p { left: 781px; top: 470px; width: 39px; height: 32px; }
.c-q { left: 847px; top: 470px; width: 39px; height: 32px; }

/* sticky ad */
.collapse {
  position: absolute; left: 0; top: 497px; width: 59px; height: 25px; background: #fafafa;
  border: 1px solid #e4e4e4; border-bottom: 0; border-radius: 8px 8px 0 0;
  display: flex; align-items: center; justify-content: center; padding-right: 1px;
}
.adbar { position: absolute; left: 0; top: 522px; width: 1342px; bottom: 0; background: #fafafa; padding-top: 5px; border-bottom-left-radius: 8px; }
.ad {
  position: relative; height: 124px; margin-left: 170px; width: 1004px; background: #fff;
  border-top: 1px solid #dcdcdc; border-left: 1px solid #e8e8e8; border-right: 1px solid #e8e8e8; border-bottom: 2px solid #e4e4e4;
  display: flex;
}
.adbar::before { content: ""; position: absolute; left: 0; right: 0; top: 5px; height: 1px; background: #dcdcdc; }
.ad-text { width: 704px; padding: 27px 0 0 61px; }
.ad-title { font: 35px/42px "Inter", "Roboto", sans-serif; letter-spacing: .1px; color: #333; white-space: nowrap; }
.ad-sub { font: 16px/24px "Roboto", sans-serif; letter-spacing: .15px; color: #666; margin-top: 4px; white-space: nowrap; }
.ad-btn {
  width: 199px; height: 37px; margin-top: 43px; border-radius: 19px; background: #0088ff; color: #fff;
  font: 14px "Roboto", sans-serif; display: flex; align-items: center; justify-content: center; gap: 13px;
  box-shadow: 0 8px 14px rgba(60, 70, 100, .28);
}
.ad-icons { position: absolute; right: 1px; top: 1px; display: flex; align-items: center; gap: 6px; }

/* taskbar */
.taskbar { height: 40px; flex: none; background: #2b2725; display: flex; align-items: stretch; color: #fff; }
.start { width: 48px; display: flex; align-items: center; justify-content: center; }
.search { width: 288px; background: #f3f3f3; display: flex; align-items: center; padding-left: 12px; position: relative; border-top: 1px solid #c8c8c8; }
.search-text { margin-left: 11px; font: 15px "Roboto", sans-serif; letter-spacing: -.1px; color: #222; }
.sparkle { position: absolute; left: 212px; top: 4px; }
.taskview { width: 51px; display: flex; align-items: center; justify-content: center; padding-right: 3px; }
.app { width: 49px; display: flex; align-items: center; justify-content: center; position: relative; }
.app-active { background: #4f4b47; }
.app.on::after { content: ""; position: absolute; left: 1px; right: 5px; bottom: 0; height: 2px; background: #76b9ed; }
.app-active.on::after { left: 0; right: 0; }
.cmd { width: 22px; height: 20px; background: #0a0a0a; border: 1px solid #777; border-top: 3px solid #aaa; display: block; font: 5px/8px "Liberation Mono", monospace; color: #ddd; padding-left: 2px; overflow: hidden; }
.tray { margin-left: auto; display: flex; align-items: center; height: 100%; }
.weather { display: flex; align-items: center; width: 132px; gap: 8px; }
.weather-text { font: 14px "Roboto", sans-serif; }
.tic { width: 32px; display: flex; align-items: center; justify-content: center; }
.lang, .clock { display: flex; flex-direction: column; align-items: center; justify-content: center; font: 12px/18px "Roboto", sans-serif; }
.lang { width: 36px; }
.clock { width: 68px; }
.notify { width: 44px; margin-right: 11px; display: flex; align-items: center; justify-content: center; }
```
